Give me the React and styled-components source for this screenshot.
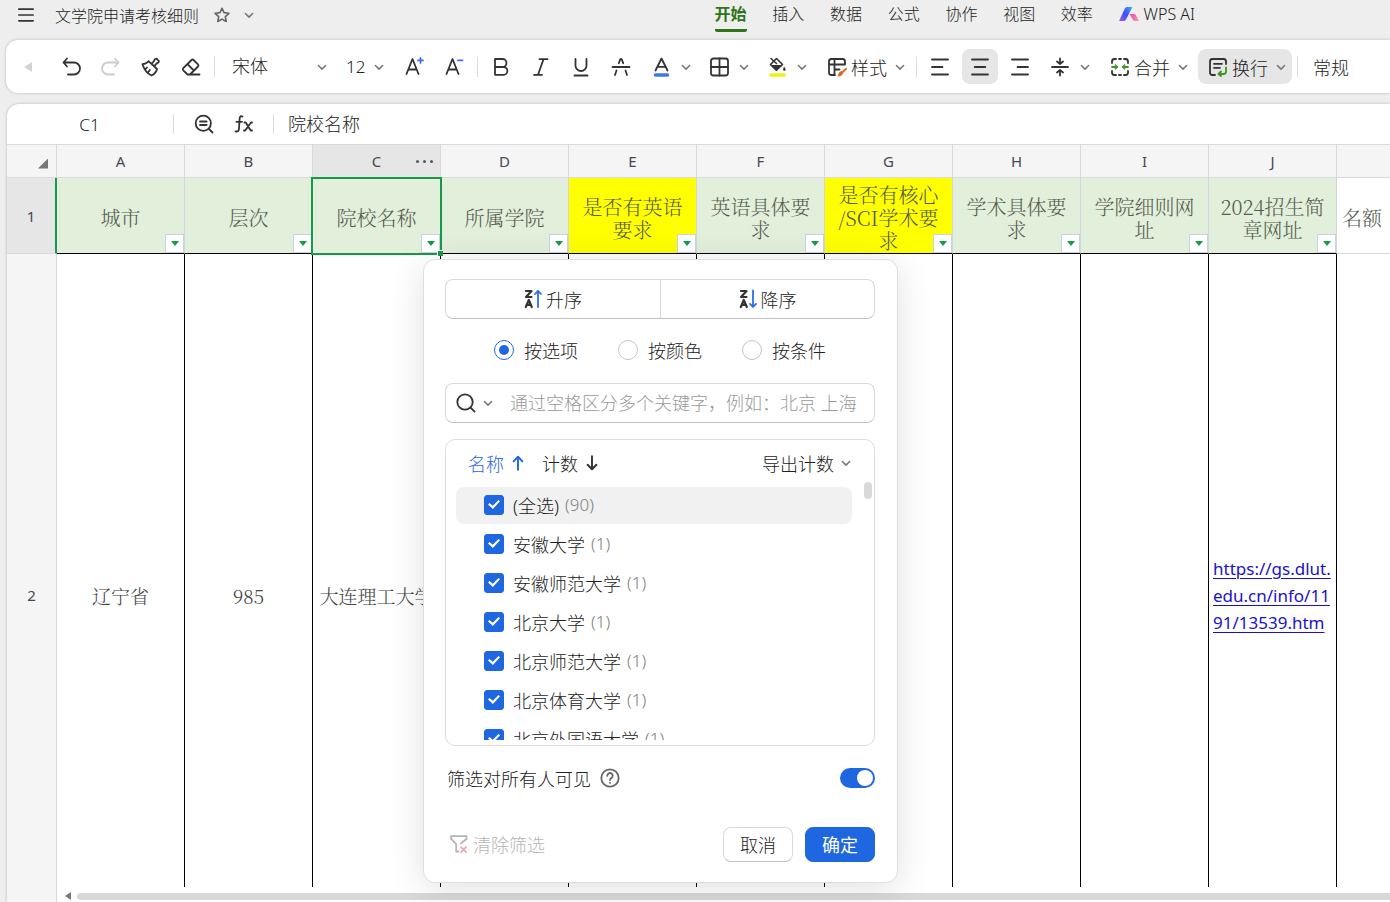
import React from "react";
import styled, { createGlobalStyle, css } from "styled-components";

const sans = `"Noto Sans", "Noto Sans CJK SC", sans-serif`;
const serif = `"Noto Serif CJK SC", "Liberation Serif", "Noto Sans CJK SC", serif`;
const ink = "#333333";
const blue = "#1f67e0";
const green = "#16994d";
const line = "#d9dadd";

const GlobalStyle = createGlobalStyle`
  *, *::before, *::after { box-sizing: border-box; }
  body { margin: 0; background: #eeeeee; }
  body, button, input, select { font-family: ${sans}; font-weight: 300; color: #222222; }
  button { border: 0; padding: 0; background: none; font-size: inherit; white-space: nowrap; }
`;

/* ---------- drawings ---------- */

const Svg = styled.svg`
  display: block;
  flex: none;
  fill: none;
  stroke: currentColor;
  stroke-linecap: round;
  stroke-linejoin: round;
`;

const drawings = {
  menu: <path d="M2 3.500h16M2 10h16M2 16.500h16" />,
  star: <path d="M10 2.500l2.300 4.900 5.400.7-4 3.700 1 5.400L10 14.600l-4.700 2.600 1-5.400-4-3.700 5.400-.7z" />,
  undo: <path d="M6 1.500 2.500 5.500 6 9.500M2.500 5.500H13a6 6 0 0 1 0 12H7" />,
  redo: <path d="M14 1.500l3.500 4L14 9.500M17.500 5.500H7a6 6 0 0 0 0 12h6" />,
  painter: (
    <path d="M7.500 4.200C6 6.300 4 7 1.500 7.200 3 12 6 16.500 10.500 18.500 13.500 17 15.500 15 16 12zM10.500 6.800l1.300-1.300c.7-.7 1.200-1 1.400-2 .2-1 1-1.800 2-1.800.9.1.8.6 1.400 1.200.7.600 1.300.500 1.300 1.400 0 1-.7 1.600-1.600 1.900-.8.3-1.200.8-1.700 1.400l-1.100 1.500M6 10.500l-1.500 1.700M8.800 13l-1.500 2" />
  ),
  eraser: <path d="M6.500 17.500 2.300 13.300a1.500 1.500 0 0 1 0-2.100l8.200-8.200a1.500 1.500 0 0 1 2.100 0l4.400 4.400a1.500 1.500 0 0 1 0 2.100L9 17.500zM6.500 7.200l6.300 6.300M6.500 17.500H18.500" />,
  grow: (
    <>
      <path d="M2.500 17 8.500 2 14.500 17M4.500 12.500h8" />
      <path d="M16.500 .9v5M14 3.400h5" stroke="#3d6ff0" />
    </>
  ),
  shrink: (
    <>
      <path d="M2.500 17 8.500 2 14.500 17M4.500 12.500h8" />
      <path d="M14 3.400h4.500" stroke="#3d6ff0" />
    </>
  ),
  bold: <path d="M4 2h7.500a4 4 0 0 1 0 8H4zM4 10h8.500a3.900 3.900 0 0 1 0 7.800H4z" />,
  italic: <path d="M8.500 2.200h8M3 17.800h8M12.500 2.200 7 17.800" />,
  underline: <path d="M4.500 2v6.500a5.500 5.500 0 0 0 11 0V2M3.500 18.500h13" />,
  strike: <path d="M1.500 10h17M7.800 6.200l1.300-3.600Q10 1 10.900 2.600L12.200 6.200M5.500 13.500 4 18M14.500 13.500 16 18" />,
  fontColor: (
    <>
      <path d="M4.500 13.500 10.500 1.500 16.500 13.500M6.500 9.800h8" />
      <path d="M4.500 18h12" stroke="#3f78e8" strokeWidth="3.600" />
    </>
  ),
  borders: (
    <>
      <rect x="2" y="1.500" width="17" height="17" rx="2.500" />
      <path d="M10.500 1.500v17M2 10h17" />
    </>
  ),
  fill: (
    <>
      <path d="M9.500 1.500 15.500 7.500 9.500 13.200 3.500 7.500z" strokeWidth="1.600" />
      <path d="M4.500 8.500h10L9.500 13.200z" fill="currentColor" strokeWidth="1" />
      <path d="M4 1.500 9.500 6.500" strokeWidth="1.600" />
      <path d="M17.300 10.300l.9 1.800a1 1 0 1 1-1.800 0z" fill="currentColor" strokeWidth=".6" />
      <path d="M4 18h13" stroke="#f4f010" strokeWidth="3.600" />
    </>
  ),
  style: (
    <>
      <path d="M18 7.500V4.500a2.500 2.500 0 0 0-2.500-2.500h-11A2.500 2.500 0 0 0 2 4.500v11A2.500 2.500 0 0 0 4.500 18H8M7.500 2v16M2 7.500h16M7.500 12.500h5" />
      <path d="M19 12l-3.500 3" stroke="#e0662a" strokeWidth="2" />
      <path d="M14.500 14.500c-2-.3-2.600 3-3.500 4.500 2.200 0 4.800-.8 4.600-3.200z" fill="#e0662a" stroke="#e0662a" strokeWidth="1" />
    </>
  ),
  left: <path d="M2 2.500h16M2 10h10.500M2 17.500h16" />,
  center: <path d="M2 2.500h16M4.700 10h10.600M2 17.500h16" />,
  right: <path d="M2 2.500h16M7.500 10H18M2 17.500h16" />,
  middle: <path d="M2 10h16M10 1.500V7M7 4.500 10 7l3-2.500M10 18.500V13M7 15.500 10 13l3 2.500" />,
  merge: (
    <>
      <path d="M2 6V4.500A2.500 2.500 0 0 1 4.500 2H6M9 2h2M14 2h1.500A2.500 2.500 0 0 1 18 4.500V6M18 14v1.500a2.500 2.500 0 0 1-2.500 2.500H14M11 18H9M6 18H4.500A2.500 2.500 0 0 1 2 15.500V14" />
      <path d="M2 10h4M18 10h-4" stroke="#3f9423" />
      <path d="M5.500 7.800 8.200 10l-2.700 2.200zM14.500 7.800 11.800 10l2.700 2.200z" fill="#3f9423" stroke="#3f9423" strokeWidth=".8" />
    </>
  ),
  wrap: (
    <>
      <path d="M7 18H4.500A2.500 2.500 0 0 1 2 15.500v-11A2.500 2.500 0 0 1 4.500 2h11A2.500 2.500 0 0 1 18 4.500V7M6 6.800h8M6 10.800h6" />
      <path d="M18 10.500v4a2.500 2.500 0 0 1-2.500 2.500H11M13 14.500 10.500 17l2.500 2" stroke="#3f9423" />
    </>
  ),
  lookup: (
    <>
      <circle cx="9.300" cy="9.300" r="7.600" />
      <path d="M15 15l3.500 3.500M6 7.500h6.600M6 11h6.600" />
    </>
  ),
  fx: <path d="M8.500 2.500C6 1.500 5.700 3.500 5.600 5L5 14.500c-.1 2.500-1 3.500-3.500 2.800M2.500 7.800h5.500M10.500 8.500h1.200l5 8H18M18 8.500h-1l-5.800 8H10" />,
  search: (
    <>
      <circle cx="9" cy="9" r="7.700" />
      <path d="M14.800 14.800 18.600 18.600" />
    </>
  ),
  chevron: <path d="M4 7.500l6 6 6-6" />,
  up: <path d="M10 18.500V2.500M4.500 8 10 2.200l5.500 5.800" />,
  down: <path d="M10 1.500v16M4.500 12.200 10 17.800l5.500-5.600" />,
  help: (
    <>
      <circle cx="10" cy="10" r="8.700" />
      <path d="M7.300 7.800a2.700 2.700 0 1 1 4.200 2.200c-1 .7-1.500 1-1.500 2.100M10 14.700v.2" />
    </>
  ),
  clear: (
    <>
      <path d="M11.800 9.500 17.500 5V2.200H2v2.500l5.200 5.500v7.300h2.300M17.500 2.200V5" />
      <path d="M12 13.200l5 5M17 13.200l-5 5" stroke="#f2a5b4" />
    </>
  ),
  sortUp: (
    <>
      <path d="M2 2h5.500L2 8h5.500M1.800 18l3-7 3 7M3 15.800h3.600" strokeWidth="2.200" />
      <path d="M14 18V2M11 5l3-3.200L17 5" stroke="#2a6fe8" />
    </>
  ),
  sortDown: (
    <>
      <path d="M2 2h5.500L2 8h5.500M1.800 18l3-7 3 7M3 15.800h3.600" strokeWidth="2.200" />
      <path d="M14 1.500v16M11 14.800l3 3.200 3-3.200" stroke="#2a6fe8" />
    </>
  ),
};

const Icon = ({ name, size = 20, weight = 1.8, color = ink }) => (
  <Svg viewBox="0 0 20 20" width={size} height={size} strokeWidth={weight} color={color} aria-hidden="true">
    {drawings[name]}
  </Svg>
);

const Chevron = () => <Icon name="chevron" size={12} weight={2.600} color="#777777" />;

const AiLogo = () => (
  <Svg viewBox="0 0 20 16" width="20" height="16" aria-hidden="true" strokeWidth="0">
    <defs>
      <linearGradient id="aiBlue" x1="0" y1="1" x2="1" y2="0">
        <stop offset="0" stopColor="#a05cf5" />
        <stop offset=".5" stopColor="#3d4df5" />
        <stop offset="1" stopColor="#3fb0ff" />
      </linearGradient>
      <linearGradient id="aiPink" x1="0" y1="0" x2="1" y2="1">
        <stop offset="0" stopColor="#e645c8" />
        <stop offset="1" stopColor="#ff9a9a" />
      </linearGradient>
    </defs>
    <path fill="url(#aiBlue)" d="M0 15 6 2.200Q6.800 1 8 1h5.500L7 13.500Q6.200 15 4.700 15z" />
    <path fill="url(#aiPink)" d="M10.500 8H15q1.200 0 1.800 1.100L20 15h-4q-1.500 0-2.200-1.200z" />
  </Svg>
);

/* ---------- frame ---------- */

const Page = styled.div`
  display: flex;
  flex-direction: column;
  height: 100vh;
  overflow: hidden;
`;

const Header = styled.header`
  display: flex;
  flex: none;
  height: 40px;
  padding-right: 195px;
`;

const TitleGroup = styled.div`
  display: flex;
  flex: 1;
  align-items: center;
  height: 30px;
  padding-left: 16px;
  font-size: 16px;
`;

const Title = styled.h1`
  margin: 0 13px 0 19px;
  font-size: 16px;
  font-weight: 300;
  white-space: nowrap;
`;

const IconButton = styled.button`
  display: grid;
  place-items: center;
  width: 20px;
  height: 20px;
  margin-right: ${(p) => p.$after || 0}px;
`;

const Tabs = styled.nav`
  display: grid;
  grid-template-columns: repeat(7, 1fr);
  justify-items: start;
  width: 404px;
`;

const Tab = styled.button`
  height: 32px;
  padding-bottom: 2px;
  border-bottom: 3px solid ${(p) => (p.$active ? "#2e7418" : "transparent")};
  border-radius: 2px;
  color: ${(p) => (p.$active ? "#2e7418" : "#222222")};
  font-size: 16px;
  font-weight: ${(p) => (p.$active ? 700 : 300)};
  line-height: 26px;
`;

const AiButton = styled.button`
  display: flex;
  align-items: center;
  gap: 5px;
  height: 27px;
  font-size: 16px;
`;

/* ---------- toolbar ---------- */

const Toolbar = styled.div`
  display: flex;
  flex: none;
  align-items: center;
  gap: 4px;
  height: 53px;
  margin-left: 6px;
  overflow: hidden;
  border-radius: 12px 0 0 12px;
  background: #ffffff;
  box-shadow: 0 0 3px rgba(0, 0, 0, 0.25);
  font-size: 18px;
`;

const Tool = styled.button`
  display: grid;
  flex: none;
  place-items: center;
  width: 36px;
  height: 35px;
  border-radius: 8px;
  background: ${(p) => (p.$active ? "#e6e6e6" : "transparent")};
`;

const ScrollTool = styled(Tool)`
  width: 43px;
`;

const LeftTriangle = styled.span`
  border: solid transparent;
  border-width: 5px 8px 5px 0;
  border-right-color: #d2d2d2;
`;

const Split = styled.div`
  display: flex;
  flex: none;
  padding-right: 4px;
`;

const SplitArrow = styled.button`
  display: grid;
  place-items: center;
  width: 14px;
  height: 35px;
`;

const TextTool = styled.button`
  display: flex;
  flex: none;
  align-items: center;
  gap: 4px;
  height: 35px;
  padding: 0 5px 0 10px;
  border-radius: 8px;
  background: ${(p) => (p.$active ? "#e6e6e6" : "transparent")};
  font-size: 18px;

  svg:last-child {
    margin-left: 3px;
  }
`;

const Rule = styled.span`
  flex: none;
  width: 1px;
  height: 20px;
  margin: 0 1px;
  background: #dddddd;
`;

const Picker = styled.label`
  display: grid;
  flex: none;
  align-items: center;
  width: ${(p) => p.$width}px;
  padding-right: ${(p) => p.$end}px;

  > * {
    grid-area: 1 / 1;
  }

  > svg {
    justify-self: end;
    pointer-events: none;
  }
`;

const PickerSelect = styled.select`
  width: 100%;
  height: 35px;
  padding: 0 0 1px 12px;
  appearance: none;
  border: 0;
  background: none;
  font-size: ${(p) => p.$size}px;
`;

/* ---------- sheet ---------- */

const Sheet = styled.main`
  display: flex;
  flex: 1;
  flex-direction: column;
  min-height: 0;
  margin: 11px 0 0 7px;
  overflow: hidden;
  border-radius: 12px 0 0 0;
  background: #ffffff;
  box-shadow: 0 0 3px rgba(0, 0, 0, 0.25);
`;

const FormulaBar = styled.div`
  display: flex;
  flex: none;
  align-items: center;
  height: 41px;
  border-bottom: 1px solid ${line};
  font-size: 18px;
`;

const NameBox = styled.input`
  width: 165px;
  height: 32px;
  border: 0;
  background: none;
  font-size: 17px;
  text-align: center;
`;

const FormulaTools = styled.div`
  display: flex;
  gap: 20px;
  padding: 0 18px 0 19px;
`;

const FormulaInput = styled.input`
  flex: 1;
  min-width: 0;
  height: 32px;
  padding: 0 0 2px 13px;
  border: 0;
  background: none;
  font-size: 18px;
`;

const GridArea = styled.div`
  position: relative;
  flex: 1;
  min-height: 0;
`;

const GridClip = styled.div`
  height: 100%;
  overflow: hidden;
`;

const Grid = styled.table`
  width: 100%;
  min-width: 1383px;
  table-layout: fixed;
  border-collapse: separate;
  border-spacing: 0;
`;

const IndexCol = styled.col`
  width: 50px;
`;

const DataCol = styled.col`
  width: 128px;
`;

const headCell = css`
  padding: 0;
  border: solid ${line};
  border-width: 0 1px 1px 0;
  color: #444955;
  font-size: 15px;
  font-weight: 400;
`;

const ColumnHead = styled.th`
  ${headCell}
  position: relative;
  height: 33px;
  background: ${(p) => (p.$active ? "#e6e6e7" : "#f5f5f6")};

  &:last-child {
    border-right: 0;
  }
`;

const Corner = styled.span`
  display: block;
  width: 10px;
  height: 10px;
  margin: 5px 8px 0 auto;
  background: #777777;
  clip-path: polygon(100% 0, 100% 100%, 0 100%);
`;

const MoreButton = styled.button`
  position: absolute;
  top: 0;
  right: 7px;
  display: flex;
  align-items: center;
  gap: 4px;
  height: 32px;
`;

const Dot = styled.span`
  width: 3px;
  height: 3px;
  border-radius: 50%;
  background: #555966;
`;

const RowHead = styled.th`
  ${headCell}
  background: ${(p) => (p.$active ? "#e6e6e7" : "#f5f5f6")};
  border-right: ${(p) => (p.$active ? `2px solid ${green}` : `1px solid ${line}`)};
`;

const TitleCell = styled.td`
  position: relative;
  height: 76px;
  padding: 4px 8px 0;
  border-right: 1px solid #d0d6dc;
  border-bottom: 1px solid #000000;
  background: ${(p) => (p.$yellow ? "#ffff00" : "#e2efda")};
  color: #555b50;
  font-family: ${serif};
  font-size: 20px;
  line-height: 23px;
  text-align: center;
  vertical-align: middle;
`;

const PlainTitleCell = styled(TitleCell)`
  padding: 4px 0 0 5px;
  border-right: 0;
  border-bottom-color: ${line};
  background: #ffffff;
  text-align: left;
`;

const SelectionFrame = styled.span`
  position: absolute;
  z-index: 1;
  inset: -1px -2px -2px -2px;
  border: 2px solid ${green};
  pointer-events: none;

  &::after {
    position: absolute;
    right: -3px;
    bottom: -3px;
    width: 6px;
    height: 6px;
    border: solid #ffffff;
    border-width: 1px 0 0 1px;
    background: ${green};
    content: "";
  }
`;

const FilterButton = styled.button`
  position: absolute;
  right: 0;
  bottom: 0;
  display: grid;
  place-items: center;
  width: 19px;
  height: 19px;
  border: 1px solid #ccd3e0;
  background: #ffffff;

  &::before {
    border: solid transparent;
    border-width: 5px 4px 0;
    border-top-color: ${green};
    content: "";
  }
`;

const DataCell = styled.td`
  height: 682px;
  padding: 0;
  border-right: 1px solid #000000;
  color: #444444;
  font-family: ${serif};
  font-size: 19px;
  text-align: center;
  white-space: nowrap;
`;

const LinkCell = styled(DataCell)`
  padding-left: 4px;
  font-family: ${sans};
  font-size: 17px;
  font-weight: 400;
  line-height: 27px;
  text-align: left;

  a {
    color: #1a12c8;
    text-underline-offset: 3px;
  }
`;

const OpenCell = styled(DataCell)`
  border-right: 0;
`;

const ScrollRow = styled.div`
  display: flex;
  flex: none;
  height: 15px;
`;

const ScrollGutter = styled.div`
  width: 50px;
  border-right: 1px solid ${line};
  background: #f5f5f6;
`;

const ScrollTrack = styled.div`
  display: flex;
  flex: 1;
  align-items: center;
  gap: 6px;
  padding: 3px 0 0 8px;
`;

const ScrollArrow = styled.span`
  border: solid transparent;
  border-width: 4px 6px 4px 0;
  border-right-color: #777777;
`;

const ScrollThumb = styled.span`
  flex: 1;
  height: 7px;
  border-radius: 4px 0 0 4px;
  background: #d9d9d9;
`;

/* ---------- filter panel ---------- */

const Panel = styled.section`
  position: absolute;
  z-index: 2;
  top: 114px;
  left: 416px;
  display: flex;
  flex-direction: column;
  gap: 16px;
  width: 475px;
  padding: 19px 22px 20px 21px;
  border: 1px solid #dedede;
  border-radius: 12px;
  background: #ffffff;
  box-shadow: 0 6px 36px rgba(0, 0, 0, 0.12);
  font-size: 18px;
`;

const outlined = css`
  border: 1px solid #dadada;
  border-bottom-color: #c2c2c2;
  border-radius: 8px;
`;

const SortGroup = styled.div`
  ${outlined}
  display: grid;
  grid-template-columns: 1fr 1fr;
  height: 40px;
`;

const SortButton = styled.button`
  display: flex;
  align-items: center;
  justify-content: center;
  gap: 2px;
  padding-bottom: 1px;

  & + & {
    border-left: 1px solid #dadada;
  }
`;

const ModeGroup = styled.div`
  display: flex;
  align-items: flex-start;
  justify-content: center;
  gap: 40px;
  height: 32px;
`;

const ModeLabel = styled.label`
  display: flex;
  align-items: center;
  gap: 10px;
  height: 30px;
`;

const Radio = styled.input`
  display: grid;
  place-items: center;
  width: 20px;
  height: 20px;
  margin: 0;
  appearance: none;
  border: 1px solid #c4c4c4;
  border-radius: 50%;

  &:checked {
    border-color: ${blue};
  }

  &:checked::before {
    width: 10px;
    height: 10px;
    border-radius: 50%;
    background: ${blue};
    content: "";
  }
`;

const SearchBox = styled.div`
  ${outlined}
  display: flex;
  align-items: center;
  gap: 6px;
  height: 40px;
  padding-left: 10px;
`;

const SearchInput = styled.input`
  flex: 1;
  min-width: 0;
  height: 36px;
  padding: 0 0 0 10px;
  border: 0;
  background: none;
  font-size: 18px;

  &::placeholder {
    color: #999999;
    opacity: 1;
  }
`;

const ListBox = styled.div`
  height: 307px;
  border: 1px solid #dedede;
  border-radius: 10px;
`;

const ListHead = styled.div`
  display: flex;
  align-items: center;
  gap: 16px;
  height: 42px;
  padding: 3px 22px 0;
`;

const ListSort = styled.button`
  display: flex;
  align-items: center;
  gap: 6px;
  color: ${(p) => (p.$active ? blue : "#222222")};
`;

const ExportButton = styled(ListSort)`
  margin-left: auto;
`;

const ListBody = styled.div`
  display: flex;
  gap: 12px;
  height: 258px;
  padding: 0 2px 0 10px;
`;

const OptionList = styled.ul`
  display: flex;
  flex: 1;
  flex-direction: column;
  gap: 2px;
  margin: 5px 0 0;
  padding: 0;
  overflow: hidden;
  list-style: none;
`;

const ListThumb = styled.span`
  width: 8px;
  height: 17px;
  border-radius: 4px;
  background: #d9d9d9;
`;

const Option = styled.li`
  flex: none;
  height: 37px;
  border-radius: 8px;
  background: ${(p) => (p.$active ? "#f1f1f1" : "transparent")};
`;

const OptionLabel = styled.label`
  display: flex;
  align-items: center;
  height: 35px;
  padding-left: 28px;
`;

const CheckBox = styled.input`
  display: grid;
  place-items: center;
  width: 20px;
  height: 20px;
  margin: 0 9px 0 0;
  appearance: none;
  border: 1px solid #c4c4c4;
  border-radius: 3px;

  &:checked {
    border-color: ${blue};
    background: ${blue};
  }

  &:checked::before {
    width: 12px;
    height: 9px;
    background: #ffffff;
    clip-path: polygon(0 50%, 12% 34%, 40% 64%, 88% 0, 100% 14%, 41% 100%);
    content: "";
  }
`;

const Count = styled.span`
  margin-left: 6px;
  color: #808080;
  font-size: 17px;
`;

const VisibleRow = styled.div`
  display: flex;
  align-items: center;
  justify-content: space-between;
  height: 32px;
  padding-left: 2px;
`;

const VisibleText = styled.span`
  display: flex;
  align-items: center;
  gap: 9px;
`;

const Switch = styled.input`
  display: flex;
  align-items: center;
  justify-content: flex-end;
  width: 35px;
  height: 20px;
  margin: 0;
  padding: 0 2px;
  appearance: none;
  border-radius: 10px;
  background: ${blue};

  &::before {
    width: 16px;
    height: 16px;
    border-radius: 50%;
    background: #ffffff;
    content: "";
  }
`;

const Actions = styled.div`
  display: flex;
  gap: 12px;
  margin-top: 17px;
`;

const ClearButton = styled.button`
  display: flex;
  align-items: center;
  gap: 4px;
  margin-right: auto;
  padding: 0 0 2px 4px;
  color: #b5b5b5;
`;

const ActionButton = styled.button`
  ${outlined}
  width: 70px;
  height: 35px;
  padding-bottom: 2px;
  ${(p) =>
    p.$primary &&
    css`
      border-color: ${blue};
      background: ${blue};
      color: #ffffff;
      font-weight: 400;
    `}
`;

/* ---------- content ---------- */

const tabs = ["开始", "插入", "数据", "公式", "协作", "视图", "效率"];
const letters = ["A", "B", "C", "D", "E", "F", "G", "H", "I", "J"];
const titles = [
  "城市",
  "层次",
  "院校名称",
  "所属学院",
  "是否有英语要求",
  "英语具体要求",
  "是否有核心\n/SCI学术要\n求",
  "学术具体要求",
  "学院细则网址",
  "2024招生简\n章网址",
];
const rowTwo = ["辽宁省", "985", "大连理工大学", "", "", "", "", "", ""];
const options = [
  ["(全选)", 90],
  ["安徽大学", 1],
  ["安徽师范大学", 1],
  ["北京大学", 1],
  ["北京师范大学", 1],
  ["北京体育大学", 1],
  ["北京外国语大学", 1],
];

const SplitTool = ({ name, label }) => (
  <Split>
    <Tool aria-label={label}>
      <Icon name={name} />
    </Tool>
    <SplitArrow aria-label={`${label}选项`}>
      <Chevron />
    </SplitArrow>
  </Split>
);

const IconTool = ({ name, label, active, color }) => (
  <Tool aria-label={label} $active={active}>
    <Icon name={name} color={color} />
  </Tool>
);

const LabelTool = ({ name, label, active }) => (
  <TextTool $active={active}>
    <Icon name={name} />
    {label}
    <Chevron />
  </TextTool>
);

const AppHeader = () => (
  <Header>
    <TitleGroup>
      <IconButton aria-label="菜单">
        <Icon name="menu" size={18} />
      </IconButton>
      <Title>文学院申请考核细则</Title>
      <IconButton aria-label="收藏" $after={7}>
        <Icon name="star" size={18} color="#666666" />
      </IconButton>
      <IconButton aria-label="更多">
        <Chevron />
      </IconButton>
    </TitleGroup>
    <Tabs>
      {tabs.map((t, i) => (
        <Tab key={t} $active={i === 0}>
          {t}
        </Tab>
      ))}
    </Tabs>
    <AiButton>
      <AiLogo />
      WPS AI
    </AiButton>
  </Header>
);

const Ribbon = () => (
  <Toolbar>
    <ScrollTool aria-label="向左滚动">
      <LeftTriangle />
    </ScrollTool>
    <IconTool name="undo" label="撤销" />
    <IconTool name="redo" label="恢复" color="#cccccc" />
    <IconTool name="painter" label="格式刷" />
    <IconTool name="eraser" label="清除" />
    <Rule />
    <Picker $width={110} $end={2}>
      <PickerSelect $size={18} aria-label="字体" defaultValue="宋体">
        <option>宋体</option>
      </PickerSelect>
      <Chevron />
    </Picker>
    <Picker $width={58} $end={7}>
      <PickerSelect $size={17} aria-label="字号" defaultValue="12">
        <option>12</option>
      </PickerSelect>
      <Chevron />
    </Picker>
    <IconTool name="grow" label="增大字号" />
    <IconTool name="shrink" label="减小字号" />
    <Rule />
    <IconTool name="bold" label="加粗" />
    <IconTool name="italic" label="斜体" />
    <IconTool name="underline" label="下划线" />
    <IconTool name="strike" label="删除线" />
    <SplitTool name="fontColor" label="字体颜色" />
    <SplitTool name="borders" label="边框" />
    <SplitTool name="fill" label="填充颜色" />
    <LabelTool name="style" label="样式" />
    <Rule />
    <IconTool name="left" label="左对齐" />
    <IconTool name="center" label="居中" active />
    <IconTool name="right" label="右对齐" />
    <SplitTool name="middle" label="垂直居中" />
    <LabelTool name="merge" label="合并" />
    <LabelTool name="wrap" label="换行" active />
    <Rule />
    <TextTool>常规</TextTool>
  </Toolbar>
);

const SheetGrid = () => (
  <Grid>
    <colgroup>
      <IndexCol />
      {letters.map((l) => (
        <DataCol key={l} />
      ))}
      <col />
    </colgroup>
    <thead>
      <tr>
        <ColumnHead>
          <Corner />
        </ColumnHead>
        {letters.map((l) => (
          <ColumnHead key={l} scope="col" $active={l === "C"}>
            {l}
            {l === "C" && (
              <MoreButton aria-label="列选项">
                <Dot />
                <Dot />
                <Dot />
              </MoreButton>
            )}
          </ColumnHead>
        ))}
        <ColumnHead />
      </tr>
    </thead>
    <tbody>
      <tr>
        <RowHead scope="row" $active>
          1
        </RowHead>
        {titles.map((t, i) => (
          <TitleCell key={t} $yellow={i === 4 || i === 6}>
            {t.split("\n").map((part, n) => (
              <React.Fragment key={part}>
                {n > 0 && <br />}
                {part}
              </React.Fragment>
            ))}
            <FilterButton aria-label={`筛选${letters[i]}列`} />
            {i === 2 && <SelectionFrame />}
          </TitleCell>
        ))}
        <PlainTitleCell>名额</PlainTitleCell>
      </tr>
      <tr>
        <RowHead scope="row">2</RowHead>
        {rowTwo.map((t, i) => (
          <DataCell key={letters[i]}>{t}</DataCell>
        ))}
        <LinkCell>
          <a href="https://gs.dlut.edu.cn/info/1191/13539.htm">
            https://gs.dlut.
            <br />
            edu.cn/info/11
            <br />
            91/13539.htm
          </a>
        </LinkCell>
        <OpenCell />
      </tr>
    </tbody>
  </Grid>
);

const FilterPanel = () => (
  <Panel aria-label="筛选">
    <SortGroup>
      <SortButton>
        <Icon name="sortUp" />
        升序
      </SortButton>
      <SortButton>
        <Icon name="sortDown" />
        降序
      </SortButton>
    </SortGroup>
    <ModeGroup>
      {["按选项", "按颜色", "按条件"].map((m, i) => (
        <ModeLabel key={m}>
          <Radio type="radio" name="mode" defaultChecked={i === 0} />
          {m}
        </ModeLabel>
      ))}
    </ModeGroup>
    <SearchBox>
      <Icon name="search" />
      <Chevron />
      <SearchInput aria-label="搜索" placeholder="通过空格区分多个关键字，例如：北京 上海" />
    </SearchBox>
    <ListBox>
      <ListHead>
        <ListSort $active>
          名称
          <Icon name="up" size={16} weight={2.400} color={blue} />
        </ListSort>
        <ListSort>
          计数
          <Icon name="down" size={16} weight={2.400} />
        </ListSort>
        <ExportButton>
          导出计数
          <Chevron />
        </ExportButton>
      </ListHead>
      <ListBody>
        <OptionList>
          {options.map(([name, count], i) => (
            <Option key={name} $active={i === 0}>
              <OptionLabel>
                <CheckBox type="checkbox" defaultChecked />
                {name}
                <Count>({count})</Count>
              </OptionLabel>
            </Option>
          ))}
        </OptionList>
        <ListThumb />
      </ListBody>
    </ListBox>
    <VisibleRow>
      <VisibleText>
        <label htmlFor="visible">筛选对所有人可见</label>
        <Icon name="help" color="#666666" />
      </VisibleText>
      <Switch id="visible" type="checkbox" role="switch" defaultChecked />
    </VisibleRow>
    <Actions>
      <ClearButton>
        <Icon name="clear" color="#b5b5b5" />
        清除筛选
      </ClearButton>
      <ActionButton>取消</ActionButton>
      <ActionButton $primary>确定</ActionButton>
    </Actions>
  </Panel>
);

export default function App() {
  return (
    <Page>
      <GlobalStyle />
      <AppHeader />
      <Ribbon />
      <Sheet>
        <FormulaBar>
          <NameBox aria-label="名称框" defaultValue="C1" />
          <Rule />
          <FormulaTools>
            <IconButton aria-label="查找">
              <Icon name="lookup" />
            </IconButton>
            <IconButton aria-label="插入函数">
              <Icon name="fx" />
            </IconButton>
          </FormulaTools>
          <Rule />
          <FormulaInput aria-label="编辑栏" defaultValue="院校名称" />
        </FormulaBar>
        <GridArea>
          <GridClip>
            <SheetGrid />
          </GridClip>
          <FilterPanel />
        </GridArea>
        <ScrollRow>
          <ScrollGutter />
          <ScrollTrack>
            <ScrollArrow />
            <ScrollThumb />
          </ScrollTrack>
        </ScrollRow>
      </Sheet>
    </Page>
  );
}
